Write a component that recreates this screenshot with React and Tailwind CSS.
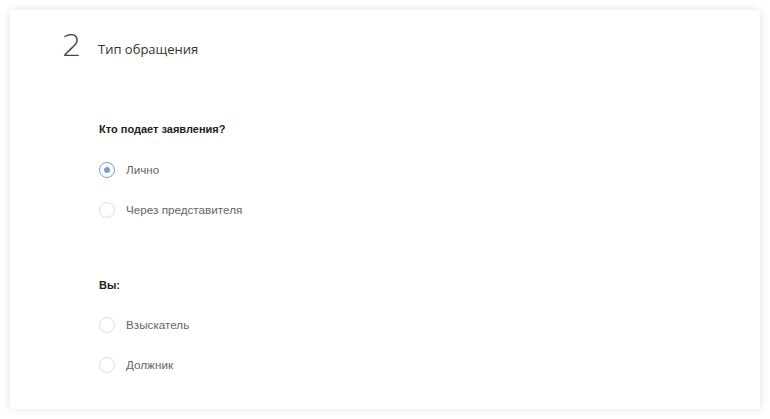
import { useState } from "react";

const Radio = ({ checked, label, onClick }) => (
    <label className="flex items-center h-[20px] cursor-pointer" onClick={onClick}>
        <span
            className={`w-[16px] h-[16px] rounded-full border flex items-center justify-center ${
                checked ? "border-[#7d9fcf]" : "border-[#dcdcdc]"
            }`}
        >
            {checked && <span className="w-[6px] h-[6px] rounded-full bg-[#7d9fcf]" />}
        </span>
        <span className="ml-[11px] text-[11.7px] text-[#666] font-['Liberation_Sans',sans-serif]">{label}</span>
    </label>
);

export default function App() {
    const [kto, setKto] = useState("lichno");
    const [vy, setVy] = useState("");

    return (
        <div className="w-[770px] h-[419px] bg-white pt-[10px] px-[10px]">
            <div className="h-[399px] bg-white shadow-[0_0_8px_rgba(0,0,0,0.12)] pl-[52px] pt-[18px]">
                {/* Заголовок шага */}
                <div className="flex items-end h-[34px]">
                    <span className="w-[36px] text-[31px] leading-[34px] font-extralight text-[#444] font-['DejaVu_Sans',sans-serif]">
                        2
                    </span>
                    <span className="text-[13px] leading-[20px] mb-[3px] text-[#333] font-['Open_Sans',sans-serif]">
                        Тип обращения
                    </span>
                </div>

                <div className="pl-[37px] mt-[59px] font-['Liberation_Sans',sans-serif]">
                    <div className="text-[11px] font-bold text-[#222]">Кто подает заявления?</div>
                    <div className="mt-[22px] flex flex-col gap-[20px]">
                        <Radio checked={kto === "lichno"} label="Лично" onClick={() => setKto("lichno")} />
                        <Radio checked={kto === "pred"} label="Через представителя" onClick={() => setKto("pred")} />
                    </div>

                    <div className="mt-[57px] text-[11px] font-bold text-[#222]">Вы:</div>
                    <div className="mt-[22px] flex flex-col gap-[20px]">
                        <Radio checked={vy === "vz"} label="Взыскатель" onClick={() => setVy("vz")} />
                        <Radio checked={vy === "dol"} label="Должник" onClick={() => setVy("dol")} />
                    </div>
                </div>
            </div>
        </div>
    );
}
